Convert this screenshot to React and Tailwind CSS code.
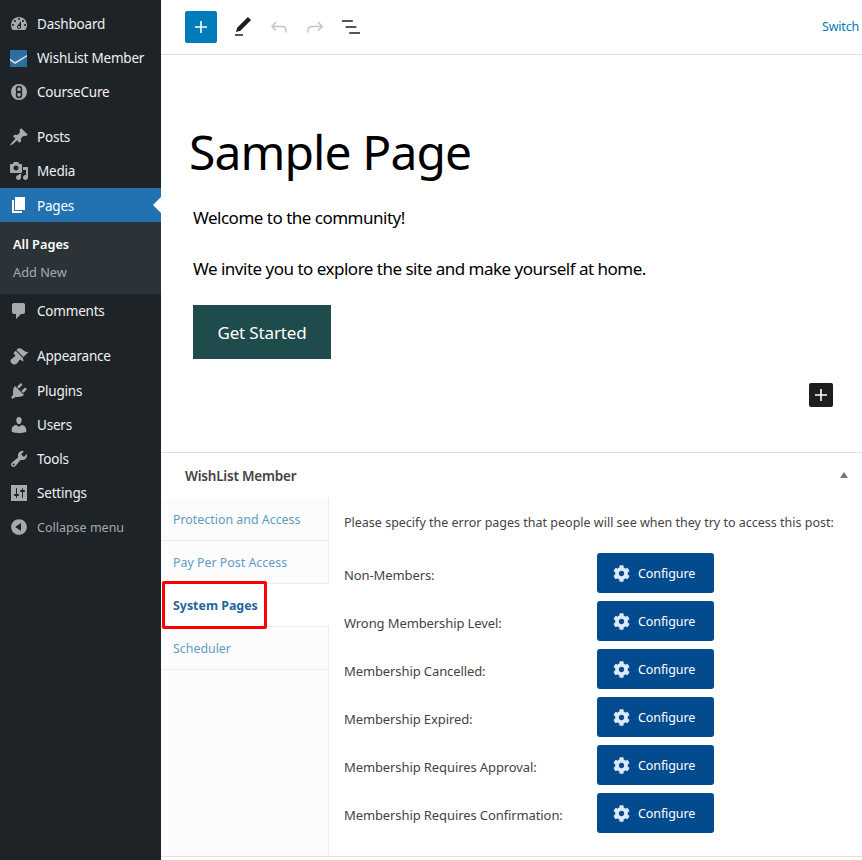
import { FaCog } from "react-icons/fa";

const font = "font-['Noto_Sans','Open_Sans',sans-serif]";

const dash = {
  dashboard:
    "M3.76 16h12.48c1.1-1.37 1.76-3.11 1.76-5 0-4.42-3.58-8-8-8s-8 3.58-8 8c0 1.89.66 3.63 1.76 5zM10 4c.55 0 1 .45 1 1s-.45 1-1 1-1-.45-1-1 .45-1 1-1zM6 6c.55 0 1 .45 1 1s-.45 1-1 1-1-.45-1-1 .45-1 1-1zm8 0c.55 0 1 .45 1 1s-.45 1-1 1-1-.45-1-1 .45-1 1-1zm-5.37 5.55L12 7v6c0 1.1-.9 2-2 2s-2-.9-2-2c0-.57.24-1.08.63-1.45zM4 10c.55 0 1 .45 1 1s-.45 1-1 1-1-.45-1-1 .45-1 1-1zm12 0c.55 0 1 .45 1 1s-.45 1-1 1-1-.45-1-1 .45-1 1-1zm-5 3c0-.55-.45-1-1-1s-1 .45-1 1 .45 1 1 1 1-.45 1-1z",
  posts:
    "M10.44 3.02l1.82-1.82 6.36 6.35-1.83 1.82c-1.05-.68-2.48-.57-3.41.36l-.75.75c-.92.93-1.04 2.35-.35 3.41l-1.83 1.82-2.41-2.41-2.8 2.79c-.42.42-3.38 2.71-3.8 2.29s1.86-3.39 2.28-3.81l2.79-2.79L4.1 9.36l1.83-1.82c1.05.69 2.48.57 3.4-.36l.75-.75c.93-.92 1.05-2.35.36-3.41z",
  media:
    "M13 11V4c0-.55-.45-1-1-1h-1.67L9 1H5L3.67 3H2c-.55 0-1 .45-1 1v7c0 .55.45 1 1 1h10c.55 0 1-.45 1-1zM7 4.5c1.38 0 2.5 1.12 2.5 2.5S8.38 9.5 7 9.5 4.5 8.38 4.5 7 5.62 4.5 7 4.5zM14 6h5v10.5c0 1.38-1.12 2.5-2.5 2.5S14 17.88 14 16.5s1.12-2.5 2.5-2.5c.17 0 .34.02.5.05V9h-3V6zm-4 8.05V13h2v3.5c0 1.38-1.12 2.5-2.5 2.5S7 17.88 7 16.5 8.12 14 9.5 14c.17 0 .34.02.5.05z",
  pages: "M6 15V2h10v13H6zm-1 1h8v2H3V5h2v11z",
  comments: "M5 2h9c1.1 0 2 .9 2 2v7c0 1.1-.9 2-2 2h-2l-5 5v-5H5c-1.1 0-2-.9-2-2V4c0-1.1.9-2 2-2z",
  appearance:
    "M14.48 11.06L7.41 3.99l1.5-1.5c.5-.56 2.3-.47 3.51.32 1.21.8 1.43 1.28 2.91 2.1 1.18.64 2.45 1.26 4.45.85zm-.71.71L6.7 4.7 4.93 6.47c-.39.39-.39 1.02 0 1.41l1.06 1.06c.39.39.39 1.03 0 1.42-.6.6-1.43 1.11-2.21 1.69-.35.26-.7.53-1.01.84C1.43 13.23.78 15.38 2.7 17.3s4.07 1.27 5.41-.07c.31-.31.58-.66.85-1.02.57-.78 1.08-1.61 1.69-2.21.39-.39 1.02-.39 1.41 0l1.06 1.06c.39.39 1.02.39 1.41 0z",
  plugins:
    "M13.11 4.36L9.87 7.6 8 5.73l3.24-3.24c.35-.34 1.05-.2 1.56.32.52.51.66 1.21.31 1.55zm-8 1.77l.91-1.12 9.01 9.01-1.19.84c-.71.71-2.63 1.16-3.82 1.16H6.14L4.9 17.26c-.59.59-1.54.59-2.12 0-.59-.58-.59-1.53 0-2.12l1.24-1.24v-3.88c0-1.13.4-3.19 1.09-3.89zm7.26 3.97l3.24-3.24c.34-.35 1.04-.21 1.55.31.52.51.66 1.21.31 1.55l-3.24 3.25z",
  users:
    "M10 9.25c-2.27 0-2.73-3.44-2.73-3.44C7 4.02 7.82 2 9.97 2c2.16 0 2.98 2.02 2.71 3.81 0 0-.41 3.44-2.68 3.44zm0 2.57L12.72 10c2.39 0 4.52 2.33 4.52 4.53v2.49s-3.65 1.13-7.24 1.13c-3.65 0-7.24-1.13-7.24-1.13v-2.49c0-2.25 1.94-4.48 4.47-4.48z",
  tools:
    "M16.68 9.77c-1.34 1.34-3.3 1.67-4.95.99l-5.41 6.52c-.99.99-2.59.99-3.58 0s-.99-2.59 0-3.57l6.52-5.42c-.68-1.65-.35-3.61.99-4.95 1.28-1.28 3.12-1.62 4.72-1.06l-2.89 2.89 2.82 2.82 2.86-2.87c.53 1.58.18 3.39-1.08 4.65zM3.81 16.21c.4.39 1.04.39 1.43 0 .4-.4.4-1.04 0-1.43-.39-.4-1.03-.4-1.43 0-.39.39-.39 1.03 0 1.43z",
  settings:
    "M18 18V2H2v16h16zM8 11h1c.55 0 1 .45 1 1s-.45 1-1 1H8v1.5c0 .28-.22.5-.5.5s-.5-.22-.5-.5V13H6c-.55 0-1-.45-1-1s.45-1 1-1h1V5.5c0-.28.22-.5.5-.5s.5.22.5.5V11zm5-2h-1c-.55 0-1-.45-1-1s.45-1 1-1h1V5.5c0-.28.22-.5.5-.5s.5.22.5.5V7h1c.55 0 1 .45 1 1s-.45 1-1 1h-1v5.5c0 .28-.22.5-.5.5s-.5-.22-.5-.5V9z",
  collapse:
    "M10 2.16c4.33 0 7.84 3.51 7.84 7.84s-3.51 7.84-7.84 7.84S2.16 14.33 2.16 10 5.71 2.16 10 2.16zm2 11.72V6.12L6.18 9.97z",
};

function Dash({ name, className }) {
  return (
    <svg viewBox="0 0 20 20" className={className} fill="currentColor" fillRule="evenodd">
      <path d={dash[name]} />
    </svg>
  );
}

function WishListIcon() {
  return (
    <svg viewBox="0 0 17 17" className="mr-[1px] h-[17px] w-[17px]">
      <rect width="17" height="17" fill="#2c6ea0" />
      <path d="M0 8.5l5 3.5L17 5v1.6L5.2 14 0 10.5z" fill="#cfe3f1" />
    </svg>
  );
}

function CourseCureIcon() {
  return (
    <svg viewBox="0 0 20 20" className="mr-[1px] h-5 w-5">
      <circle cx="10" cy="10" r="8" fill="#a7aaad" />
      <rect x="7.5" y="4.5" width="5" height="6" rx="2.5" fill="none" stroke="#1d2327" strokeWidth="1.5" />
      <rect x="7.5" y="9.5" width="5" height="6" rx="2.5" fill="none" stroke="#1d2327" strokeWidth="1.5" />
    </svg>
  );
}

function MenuItem({ icon, label, active, muted }) {
  return (
    <div
      className={`relative flex h-[34px] items-center ${active ? "bg-[#2271b1] text-white" : muted ? "text-[#a7aaad]" : "text-[#f0f0f1]"}`}
    >
      <div className={`flex w-[37px] justify-center pl-[1px] ${active ? "text-white" : "text-[#a7aaad]"}`}>{icon}</div>
      <span className={`${muted ? "pt-[2px] text-[12.5px]" : "text-[13.5px] tracking-[-0.2px]"} ${active ? "pt-[2px]" : ""}`}>{label}</span>
      {active && (
        <div className="absolute right-0 top-[9px] h-0 w-0 border-y-[8px] border-r-[8px] border-y-transparent border-r-white" />
      )}
    </div>
  );
}

function Sidebar() {
  const icon = (name) => <Dash name={name} className="h-5 w-5" />;
  return (
    <aside className="h-[860px] w-[161px] shrink-0 bg-[#1d2327] pt-[7px]">
      <MenuItem icon={icon("dashboard")} label="Dashboard" />
      <MenuItem icon={<WishListIcon />} label="WishList Member" />
      <MenuItem icon={<CourseCureIcon />} label="CourseCure" />
      <div className="h-[11px]" />
      <MenuItem icon={icon("posts")} label="Posts" />
      <MenuItem icon={icon("media")} label="Media" />
      <MenuItem icon={icon("pages")} label="Pages" active />
      <div className="flex h-[72px] flex-col justify-center gap-[9px] bg-[#2c3338] pl-[13px] pt-[1px] text-[12.75px]">
        <div className="font-semibold text-white">All Pages</div>
        <div className="text-[#a7aaad]">Add New</div>
      </div>
      <MenuItem icon={icon("comments")} label="Comments" />
      <div className="h-[11px]" />
      <MenuItem icon={icon("appearance")} label="Appearance" />
      <div className="h-[1px]" />
      <MenuItem icon={icon("plugins")} label="Plugins" />
      <MenuItem icon={icon("users")} label="Users" />
      <MenuItem icon={icon("tools")} label="Tools" />
      <MenuItem icon={icon("settings")} label="Settings" />
      <MenuItem icon={icon("collapse")} label="Collapse menu" muted />
    </aside>
  );
}

function ToolIcon({ d, className = "" }) {
  return (
    <svg viewBox="0 0 24 24" className={`h-6 w-6 ${className}`} fill="currentColor">
      <path d={d} />
    </svg>
  );
}

function TopBar() {
  return (
    <header className="flex h-[55px] shrink-0 items-center justify-between border-b border-[#e0e0e0] pl-6 pr-[3px]">
      <div className="flex items-center">
        <div className="flex h-8 w-8 items-center justify-center rounded-[2px] bg-[#007cba] text-white">
          <ToolIcon d="M18 11.2h-5.2V6h-1.6v5.2H6v1.6h5.2V18h1.6v-5.2H18z" />
        </div>
        <ToolIcon className="ml-[14px] text-[#1e1e1e]" d="M20.1 5.1L16.9 2 6.2 12.7l-1.3 4.4 4.5-1.3L20.1 5.1zM4 20.8h8v-1.5H4v1.5z" />
        <ToolIcon className="ml-3 text-[#c4c4c4]" d="M18.3 11.7c-.6-.6-1.4-.9-2.3-.9H6.7l2.9-3.3-1.1-1-4.5 5L8.5 16l1-1-2.7-2.7H16c.5 0 .9.2 1.3.5 1 1 1 3.4 1 4.5v.3h1.5v-.2c0-1.5 0-4.3-1.5-5.7z" />
        <ToolIcon className="ml-3 text-[#c4c4c4]" d="M15.6 6.5l-1.1 1 2.9 3.3H8c-.9 0-1.7.3-2.3.9-1.4 1.5-1.4 4.2-1.4 5.6v.2h1.5v-.3c0-1.1 0-3.5 1-4.5.3-.3.7-.5 1.3-.5h9.2L14.5 15l1.1 1.1 4.6-4.6-4.6-5z" />
        <ToolIcon className="ml-3 text-[#1e1e1e]" d="M13.8 5.2H3v1.5h10.8V5.2zm-3.6 12v1.5H21v-1.5H10.2zm7.2-6H6.6v1.5h10.8v-1.5z" />
      </div>
      <span className="text-[12.5px] tracking-[-0.2px] text-[#007cba]">Switch</span>
    </header>
  );
}

function Editor() {
  return (
    <section className="relative h-[398px] shrink-0 border-b border-[#e0e0e0] pl-[28px] text-black">
      <h1 className="pt-[61px] text-[48px] leading-[72px] tracking-[-0.9px]">Sample Page</h1>
      <div className="pl-1 text-[17px]">
        <p className="mt-[16px] leading-[28px] tracking-[-0.5px]">Welcome to the community!</p>
        <p className="mt-[23px] leading-[28px] tracking-[-0.5px]">We invite you to explore the site and make yourself at home.</p>
        <div className="mt-[22px] flex h-[54px] w-[138px] items-center justify-center bg-[#1f4b4c] pt-[2px] tracking-[-0.15px] text-white">Get Started</div>
      </div>
      <div className="absolute right-[29px] top-[328px] flex h-6 w-6 items-center justify-center rounded-[2px] bg-[#1e1e1e] text-white">
        <ToolIcon d="M18 11.2h-5.2V6h-1.6v5.2H6v1.6h5.2V18h1.6v-5.2H18z" />
      </div>
    </section>
  );
}

const tabs = ["Protection and Access", "Pay Per Post Access", "System Pages", "Scheduler"];
const rows = [
  "Non-Members:",
  "Wrong Membership Level:",
  "Membership Cancelled:",
  "Membership Expired:",
  "Membership Requires Approval:",
  "Membership Requires Confirmation:",
];

function MetaBox() {
  return (
    <section className="flex h-[404px] shrink-0 flex-col border-b border-[#e0e0e0] text-[#444]">
      <div className="relative flex h-[45px] shrink-0 items-center pl-6 pt-[2px] text-[13.5px] font-semibold tracking-[-0.2px]">
        WishList Member
        <div className="absolute right-[14px] top-[19px] h-0 w-0 border-x-[4px] border-b-[6px] border-x-transparent border-b-[#777]" />
      </div>
      <div className="flex flex-1">
        <div className="relative w-[168px] shrink-0 border-r border-[#eee] bg-[#fcfcfc]">
          {tabs.map((t) => (
            <div
              key={t}
              className={`flex h-[43px] items-center border-b border-[#eee] pl-3 pt-[2px] text-[12.4px] ${t === "System Pages" ? "-mr-px bg-white font-bold text-[#23669e]" : "text-[#5f9bc4]"}`}
            >
              {t}
            </div>
          ))}
          <div className="absolute left-[1px] top-[83px] h-[48px] w-[105px] rounded-[2px] border-[3px] border-[#f00]" />
        </div>
        <div className="flex-1 pl-[15px]">
          <p className="pt-[16px] text-[12.5px] leading-[18px]">Please specify the error pages that people will see when they try to access this post:</p>
          <div className="mt-[21px] flex flex-col gap-2">
            {rows.map((r) => (
              <div key={r} className="flex h-10 items-center">
                <div className="w-[253px] pt-[6px] text-[13px] tracking-[-0.1px]">{r}</div>
                <div className="flex h-10 w-[117px] items-center rounded-[3px] bg-[#024b8e] pl-4 text-[12.5px] tracking-[-0.1px] text-white">
                  <FaCog className="h-[17px] w-[17px] text-[#dce8f5]" />
                  <span className="ml-2 pt-[2px]">Configure</span>
                </div>
              </div>
            ))}
          </div>
        </div>
      </div>
    </section>
  );
}

export default function App() {
  return (
    <div className={`flex h-[860px] w-[862px] overflow-hidden bg-white ${font}`}>
      <Sidebar />
      <main className="flex min-w-0 flex-1 flex-col">
        <TopBar />
        <Editor />
        <MetaBox />
      </main>
    </div>
  );
}
